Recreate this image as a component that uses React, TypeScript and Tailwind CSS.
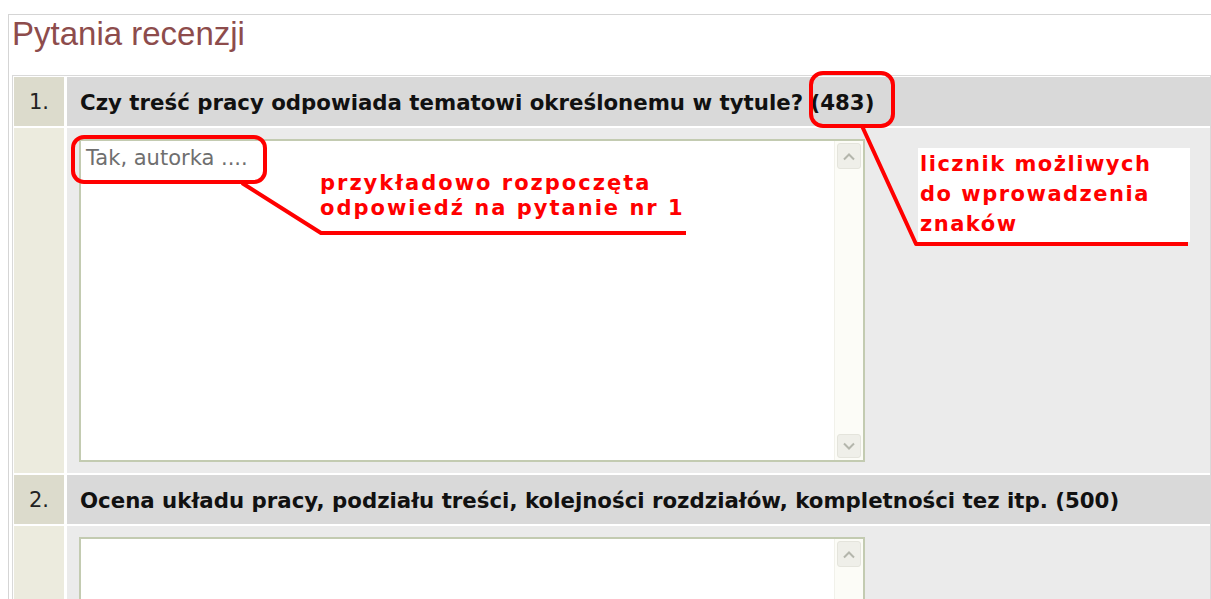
import React from "react";

type Question = {
  no: number;
  text: string;
  left: number;
  value?: string;
  bodyHeight: number;
};

const questions: Question[] = [
  {
    no: 1,
    text: "Czy treść pracy odpowiada tematowi określonemu w tytule?",
    left: 483,
    value: "Tak, autorka ....",
    bodyHeight: 345,
  },
  {
    no: 2,
    text: "Ocena układu pracy, podziału treści, kolejności rozdziałów, kompletności tez itp.",
    left: 500,
    bodyHeight: 120,
  },
];

function Chevron({ up }: { up?: boolean }) {
  return (
    <svg width="14" height="9" viewBox="0 0 14 9" className="block">
      <path
        d={up ? "M2 7.5 L7 2.5 L12 7.5" : "M2 1.5 L7 6.5 L12 1.5"}
        fill="none"
        stroke="#b4b6ac"
        strokeWidth="2"
      />
    </svg>
  );
}

// fake XP-style answer box with its own scrollbar
function AnswerBox({ value, height }: { value?: string; height: number }) {
  return (
    <div
      className="flex w-[786px] border-2 border-[#c3cbb1] bg-white"
      style={{ height }}
    >
      <div className="flex-1 px-[5px] pt-[5px] text-[21px] leading-[24px] text-[#6f6f6f] [font-family:'DejaVu_Sans',sans-serif]">
        {value}
      </div>
      <div className="flex w-[29px] flex-col justify-between border-l border-[#f1f1ea] bg-[#fcfcf7] px-[2px] py-[2px]">
        <div className="flex h-[26px] items-center justify-center rounded-[3px] border border-[#e4e4dc] bg-[#efefe9]">
          <Chevron up />
        </div>
        <div className="flex h-[24px] items-center justify-center rounded-[3px] border border-[#e4e4dc] bg-[#efefe9]">
          <Chevron />
        </div>
      </div>
    </div>
  );
}

export default function App() {
  return (
    <div className="relative h-[599px] w-[1211px] overflow-hidden bg-white">
      <div className="ml-[8px] mt-[14px] border-l border-t border-[#d5d5d5] pl-[3px]">
        <h2 className="h-[38px] text-[33px] leading-[38px] text-[#8d4c4c] [font-family:'Liberation_Sans',Arial,sans-serif]">
          Pytania recenzji
        </h2>
        <div className="mt-[22px] grid grid-cols-[50px_1fr] gap-x-[3px] gap-y-[2px] border border-[#d9d9d9] bg-white p-px pr-0 [font-family:'DejaVu_Sans',sans-serif]">
          {questions.map((q) => (
            <React.Fragment key={q.no}>
              <div className="flex h-[49px] items-center justify-center bg-[#dcdbcc] pt-[3px] text-[21px] text-[#222]">
                {q.no}.
              </div>
              <div className="flex h-[49px] items-center bg-[#d9d9d9] pl-[13px] pt-[3px] text-[21.3px] font-bold whitespace-nowrap text-[#111]">
                {q.text} ({q.left})
              </div>
              <div className="bg-[#ecebde]" style={{ height: q.bodyHeight }} />
              <div className="bg-[#ebebeb] pl-[12px] pt-[11px]" style={{ height: q.bodyHeight }}>
                <AnswerBox value={q.value} height={q.no === 1 ? 323 : 120} />
              </div>
            </React.Fragment>
          ))}
        </div>
      </div>

      {/* callouts drawn over the form */}
      <svg
        className="pointer-events-none absolute inset-0"
        width="1211"
        height="599"
        viewBox="0 0 1211 599"
      >
        <g fill="none" stroke="#ff0000" strokeWidth="4" strokeLinejoin="round">
          <rect x="73" y="137" width="192" height="45" rx="11" />
          <polyline points="242,183 321,233 686,233" />
          <rect x="811" y="73" width="82" height="53" rx="12" />
          <polyline points="862,126 916,244 1188,244" />
        </g>
      </svg>

      <div className="absolute left-[320px] top-[171px] text-[21px] font-bold leading-[25px] tracking-[2px] text-[#ff0000] [font-family:'DejaVu_Sans',sans-serif]">
        przykładowo rozpoczęta
        <br />
        odpowiedź na pytanie nr 1
      </div>

      <div className="absolute left-[918px] top-[148px] h-[94px] w-[272px] bg-white pl-[2px] pt-px text-[21px] font-bold leading-[30px] tracking-[1.5px] text-[#ff0000] [font-family:'DejaVu_Sans',sans-serif]">
        licznik możliwych
        <br />
        do wprowadzenia
        <br />
        znaków
      </div>
    </div>
  );
}
